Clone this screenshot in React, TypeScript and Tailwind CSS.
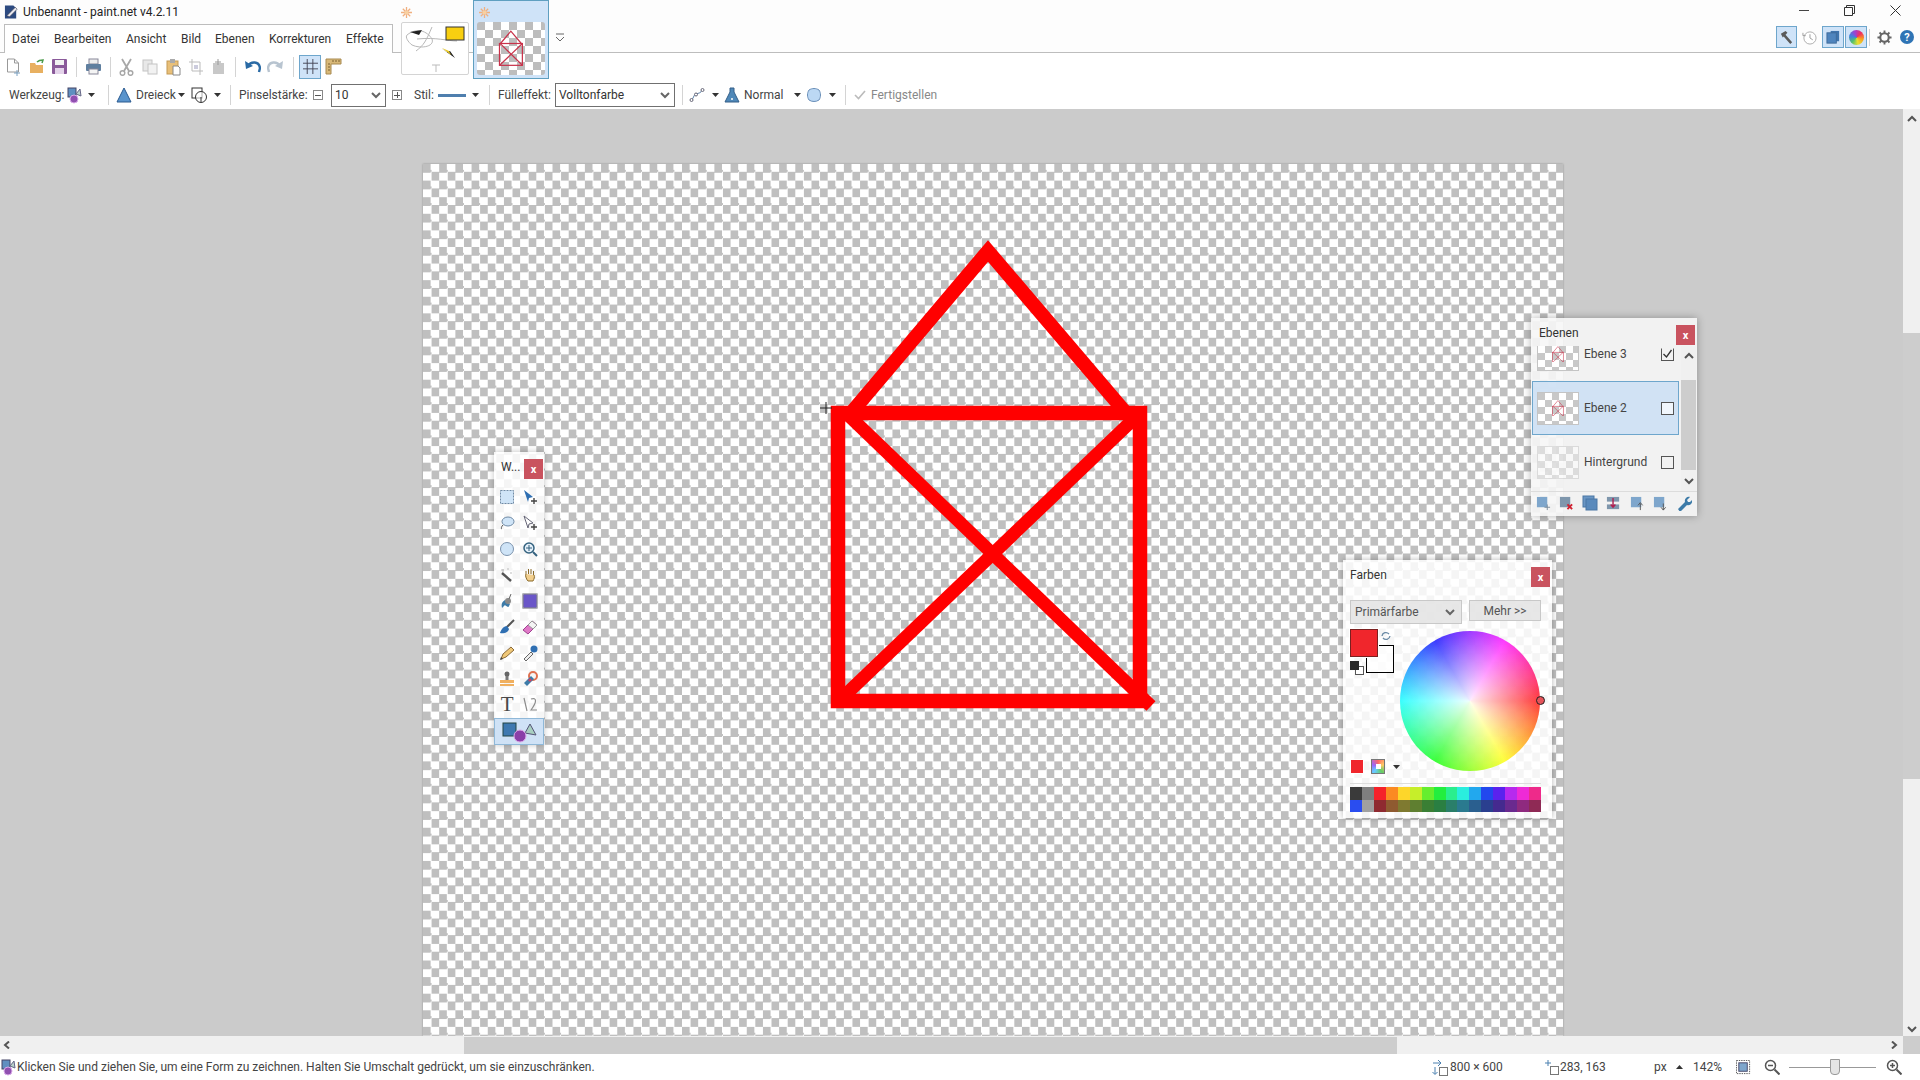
import type { ReactNode } from "react";

const PALETTE = [
  "bg-[#3a3a3a]", "bg-[#7f7f7f]", "bg-[#f5222a]", "bg-[#fb8a22]", "bg-[#fdd62a]", "bg-[#c6ee2a]", "bg-[#66ee2e]", "bg-[#22ee3e]",
  "bg-[#2aee8e]", "bg-[#2aeede]", "bg-[#22a8ee]", "bg-[#2248ee]", "bg-[#5a22ee]", "bg-[#b62aee]", "bg-[#ee2ad6]", "bg-[#ee2a8a]",
  "bg-[#2a4df0]", "bg-[#a0a0a0]", "bg-[#8f2a30]", "bg-[#8f5a30]", "bg-[#7f7a30]", "bg-[#5f7f30]", "bg-[#3a7f34]", "bg-[#2a7f42]",
  "bg-[#2a7f6a]", "bg-[#2a7a8f]", "bg-[#2a5f8f]", "bg-[#2a3f8f]", "bg-[#452a8f]", "bg-[#6a2a8f]", "bg-[#8f2a7f]", "bg-[#8f2a55]",
];

function Icon({ w = 16, h = 16, box = "0 0 16 16", children }: { w?: number; h?: number; box?: string; children: ReactNode }) {
  return (
    <svg width={w} height={h} viewBox={box} className="shrink-0" fill="none">
      {children}
    </svg>
  );
}

function Sep() {
  return <div className="h-[20px] w-px shrink-0 bg-[#d4d4d4]" />;
}

function Caret({ className = "" }: { className?: string }) {
  return (
    <svg width="7" height="4" viewBox="0 0 7 4" className={`shrink-0 ${className}`}>
      <path d="M0 0h7L3.5 4z" fill="#333" />
    </svg>
  );
}

function Chevron({ dir, color = "#555" }: { dir: "up" | "down" | "left" | "right"; color?: string }) {
  const d = {
    up: "M1 6l4-4 4 4",
    down: "M1 2l4 4 4-4",
    left: "M6 0.5L2 4l4 3.5",
    right: "M2 0.5L6 4 2 7.5",
  }[dir];
  return (
    <svg width="10" height="8" viewBox="0 0 10 8" className="shrink-0">
      <path d={d} stroke={color} strokeWidth="2" fill="none" />
    </svg>
  );
}

function House({ size = 20, color = "#c8324a", stroke = 16 }: { size?: number; color?: string; stroke?: number }) {
  return (
    <svg width={size} height={size * 1.4} viewBox="820 235 340 480" className="shrink-0">
      <g stroke={color} strokeWidth={stroke} fill="none">
        <rect x="838" y="413" width="302" height="288" />
        <polyline points="851,413 988,251 1126,413" />
        <line x1="845" y1="412" x2="1140" y2="700" />
        <line x1="840" y1="700" x2="1140" y2="413" />
      </g>
    </svg>
  );
}

function WinClose() {
  return (
    <div className="flex h-[20px] w-[19px] shrink-0 items-center justify-center bg-[#c9535f] text-[11px] font-bold leading-none text-white">
      x
    </div>
  );
}

function ToolBtn({ children }: { children: ReactNode }) {
  return <div className="flex h-[21px] items-center justify-center">{children}</div>;
}

function ToolsWindow() {
  return (
    <div className="absolute left-[494px] top-[343px] flex h-[293px] w-[50px] flex-col bg-white/85 shadow-[0_0_6px_rgba(0,0,0,0.25)]">
      <div className="flex h-[30px] items-start justify-between pl-[7px] pr-px pt-[7px]">
        <span className="text-[12px] leading-[16px] text-[#333]">W...</span>
        <WinClose />
      </div>
      <div className="mt-[4px] grid grid-cols-2 gap-y-[5px] pl-[2px] pr-[3px]">
        <ToolBtn>
          <Icon><rect x="1.5" y="1.5" width="13" height="13" fill="#cfe4f7" stroke="#6f8aa5" strokeDasharray="2 1" /></Icon>
        </ToolBtn>
        <ToolBtn>
          <Icon><path d="M2 1l9 7-4 1-1 4z" fill="#2f6fb2" /><path d="M12 9v6M9 12h6" stroke="#444" strokeWidth="1.4" /></Icon>
        </ToolBtn>
        <ToolBtn>
          <Icon><ellipse cx="9" cy="6.5" rx="6" ry="4.5" fill="#cfe4f7" stroke="#6f8aa5" /><path d="M4 10c-2 2-2 4-1 4" stroke="#555" /></Icon>
        </ToolBtn>
        <ToolBtn>
          <Icon><path d="M2 1l9 7-4 1-1 4z" fill="#fff" stroke="#667" /><path d="M12 9v6M9 12h6" stroke="#444" strokeWidth="1.4" /></Icon>
        </ToolBtn>
        <ToolBtn>
          <Icon><circle cx="8" cy="8" r="6.5" fill="#cfe4f7" stroke="#7c93ad" /></Icon>
        </ToolBtn>
        <ToolBtn>
          <Icon><circle cx="7" cy="7" r="5" fill="#e4f0fa" stroke="#34627f" strokeWidth="1.5" /><path d="M11 11l4 4" stroke="#34627f" strokeWidth="2" /><path d="M7 4v6M4 7h6" stroke="#34627f" /></Icon>
        </ToolBtn>
        <ToolBtn>
          <Icon><path d="M3 6l9 8" stroke="#555" strokeWidth="2.4" /><path d="M4 2v3M2 3h3M9 1v2M11 6h2" stroke="#bbb" /></Icon>
        </ToolBtn>
        <ToolBtn>
          <Icon><path d="M4 7V4M6.500 7V2M9 7V2M11.500 8V4M4 7c-1 1 0 5 2 7h5c1-2 2-4 1-6" stroke="#8a6a2a" fill="#f2cf8e" /></Icon>
        </ToolBtn>
        <ToolBtn>
          <Icon><path d="M3 15c-1-4 0-6 3-8l5 4c-1 2-1 3-2 3-2-1-3-2-3-2z" fill="#3d7ba8" /><circle cx="9" cy="8" r="3" fill="#8a8a8a" /><path d="M10 6l2-5" stroke="#666" /></Icon>
        </ToolBtn>
        <ToolBtn>
          <Icon><rect x="1" y="1" width="14" height="14" fill="#6a56c8" stroke="#334" /><rect x="1" y="1" width="14" height="14" fill="none" stroke="#fff" strokeWidth="0.5" /></Icon>
        </ToolBtn>
        <ToolBtn>
          <Icon><path d="M15 1L8 8" stroke="#555" strokeWidth="2" /><path d="M8 7c-4 0-6 4-7 7 3 1 8 0 9-4z" fill="#2f6fb2" /></Icon>
        </ToolBtn>
        <ToolBtn>
          <Icon><path d="M1 11l9-9 5 4-9 9z" fill="#e07ac8" stroke="#a04090" /><path d="M6 6l5 4 4-4-5-4z" fill="#f4f4f4" stroke="#999" /></Icon>
        </ToolBtn>
        <ToolBtn>
          <Icon><path d="M2 14l2-5 8-7 3 3-8 7z" fill="#f0c878" stroke="#8a6a3a" /><path d="M1 15l3-1-2-2z" fill="#444" /></Icon>
        </ToolBtn>
        <ToolBtn>
          <Icon><path d="M2 14l7-7 2 2-7 7z" fill="#eee" stroke="#666" /><circle cx="12" cy="4" r="3.500" fill="#2f6fb2" /></Icon>
        </ToolBtn>
        <ToolBtn>
          <Icon><circle cx="8" cy="3" r="2.500" fill="#666" /><rect x="6.500" y="5" width="3" height="4" fill="#777" /><rect x="1" y="9" width="14" height="3" fill="#f0b060" /><rect x="1" y="13" width="14" height="2" fill="#f0b060" /></Icon>
        </ToolBtn>
        <ToolBtn>
          <Icon><circle cx="11" cy="5" r="4" stroke="#e07050" strokeWidth="2" /><path d="M2 12l7-7 3 3-7 7z" fill="#3d7ba8" /><circle cx="8" cy="9" r="1.600" fill="#d04060" /></Icon>
        </ToolBtn>
        <ToolBtn>
          <span className="font-['Liberation_Serif',serif] text-[21px] leading-none text-[#4a4a4a]">T</span>
        </ToolBtn>
        <ToolBtn>
          <Icon><path d="M2 1l3 13M9 2c6-2 6 3 0 11h6" stroke="#8c8c8c" strokeWidth="1.2" /></Icon>
        </ToolBtn>
      </div>
      <div className="mt-auto flex h-[27px] items-center justify-center border border-[#8fb8d8] bg-[#cfe2f6]">
        <Icon w={40} h={22} box="0 0 40 22">
          <rect x="4" y="2" width="13" height="13" fill="#3d78b0" stroke="#244" />
          <path d="M26 12l5-9 6 11z" fill="#a8cfc0" stroke="#557" />
          <circle cx="21" cy="15" r="6" fill="#8a3fa8" stroke="#dca8e8" />
        </Icon>
      </div>
    </div>
  );
}

function LayerThumb({ children }: { children?: ReactNode }) {
  return (
    <div className="flex h-[33px] w-[42px] shrink-0 items-center justify-center overflow-hidden border border-[#c4c4c4] bg-[repeating-conic-gradient(#fff_0_25%,#c8c8c8_0_50%)] bg-[length:14px_14px]">
      {children}
    </div>
  );
}

function LayerRow({ name, thumb, checked, selected, dim }: { name: string; thumb: ReactNode; checked?: boolean; selected?: boolean; dim?: boolean }) {
  return (
    <div className={`flex h-[54px] items-center pl-[4px] pr-[3px] ${selected ? "border border-[#6ea6cc] bg-[#cde0f4]/90" : "border border-transparent"}`}>
      <div className={dim ? "opacity-50" : ""}>{thumb}</div>
      <span className="ml-[5px] flex-1 text-[12px] text-[#444]">{name}</span>
      <div className={`relative mr-[1px] h-[13px] w-[13px] shrink-0 border border-[#555] ${selected ? "bg-white/70" : ""} ${checked ? "border-t-transparent" : ""}`}>
        {checked && (
          <svg width="13" height="13" viewBox="0 0 13 13" className="absolute -left-px -top-px">
            <path d="M2.500 6l3 3 5-7" stroke="#333" strokeWidth="1.300" fill="none" />
          </svg>
        )}
      </div>
    </div>
  );
}

function LayersWindow() {
  return (
    <div className="absolute left-[1531px] top-[209px] flex h-[198px] w-[166px] flex-col bg-[#f6f6f6]/90 shadow-[0_0_8px_rgba(0,0,0,0.3)]">
      <div className="flex h-[28px] shrink-0 items-start justify-between pl-[8px] pr-[2px] pt-[7px]">
        <span className="text-[12px] leading-[16px] text-[#333]">Ebenen</span>
        <WinClose />
      </div>
      <div className="flex h-[145px] shrink-0 pr-px">
        <div className="min-w-0 flex-1 overflow-hidden pl-px pr-[2px]">
          <div className="-mt-[19px]">
            <LayerRow name="Ebene 3" checked thumb={<LayerThumb><House size={12} /></LayerThumb>} />
            <LayerRow name="Ebene 2" selected thumb={<LayerThumb><House size={12} /></LayerThumb>} />
            <LayerRow name="Hintergrund" dim thumb={<LayerThumb />} />
          </div>
        </div>
        <div className="flex w-[15px] shrink-0 flex-col items-center justify-between bg-[#f0f0f0] py-[6px]">
          <Chevron dir="up" />
          <div className="absolute top-[62px] h-[90px] w-[15px] bg-[#cdcdcd]" />
          <div className="relative z-10">
            <Chevron dir="down" />
          </div>
        </div>
      </div>
      <div className="flex flex-1 items-center justify-between border-t border-[#dcdcdc] px-[5px] pb-[2px]">
        <Icon w={15} h={15}><rect x="1" y="1" width="11" height="11" fill="#7ea6cc" /><path d="M12 9v6M9 12h6" stroke="#7a8a9a" /></Icon>
        <Icon w={15} h={15}><rect x="1" y="1" width="11" height="11" fill="#7e96ac" /><path d="M9 9l5 5M14 9l-5 5" stroke="#d02030" strokeWidth="2" /></Icon>
        <Icon w={16} h={16}><rect x="1" y="1" width="11" height="11" fill="#6a96c4" stroke="#4a76a4" /><rect x="4" y="4" width="11" height="11" fill="#5a8abc" stroke="#4a76a4" /></Icon>
        <Icon w={15} h={15}><rect x="1" y="1" width="13" height="5" fill="#7e96ac" /><rect x="1" y="9" width="13" height="5" fill="#7e96ac" /><path d="M7.500 2v10M5 9l2.500 3 2.500-3" stroke="#b02050" strokeWidth="1.500" fill="none" /></Icon>
        <Icon w={15} h={15}><rect x="1" y="1" width="11" height="11" fill="#7ea6cc" /><path d="M11 15V8M8.500 10l2.500-3 2.500 3" stroke="#555" fill="none" /></Icon>
        <Icon w={15} h={15}><rect x="1" y="1" width="11" height="11" fill="#7ea6cc" /><path d="M11 8v7M8.500 12l2.500 3 2.500-3" stroke="#555" fill="none" /></Icon>
        <Icon w={16} h={16}><path d="M2 14l7-7c-1-3 2-6 5-5l-3 3 1 2 2 0 2-2c1 3-2 6-5 5l-7 7z" fill="#3d7ba8" /></Icon>
      </div>
    </div>
  );
}

function ColorsWindow() {
  return (
    <div className="absolute left-[1343px] top-[451px] flex h-[258px] w-[209px] flex-col bg-white/85 px-[7px] shadow-[0_0_6px_rgba(0,0,0,0.3)]">
      <div className="-mr-[5px] flex h-[40px] shrink-0 items-start justify-between pt-[7px]">
        <span className="text-[12px] leading-[16px] text-[#333]">Farben</span>
        <WinClose />
      </div>
      <div className="flex h-[24px] shrink-0 items-start">
        <div className="flex h-[24px] w-[112px] items-center justify-between border border-[#c8c8c8] bg-[#e4e4e4]/90 pl-[4px] pr-[6px] text-[12px] text-[#555]">
          Primärfarbe
          <Chevron dir="down" color="#666" />
        </div>
        <div className="ml-[7px] flex h-[21px] w-[72px] items-center justify-center border border-[#c8c8c8] bg-[#e4e4e4]/90 text-[12px] text-[#555]">
          {"Mehr >>"}
        </div>
      </div>
      <div className="mt-[7px] flex h-[140px] shrink-0">
        <div className="flex w-[50px] shrink-0 flex-col justify-between">
          <div className="relative -mt-[2px] h-[45px]">
            <div className="absolute left-[16px] top-[16px] h-[28px] w-[28px] border border-black bg-white/70" />
            <div className="absolute left-0 top-0 h-[28px] w-[28px] border border-[#7a2020] bg-[#f0262c] outline outline-1 outline-white" />
            <svg width="10" height="10" viewBox="0 0 10 10" className="absolute left-[31px] top-[2px]">
              <path d="M1 5a4 4 0 0 1 7-2M9 5a4 4 0 0 1-7 2" stroke="#6a8aa5" strokeWidth="1.300" fill="none" />
            </svg>
            <div className="absolute left-[5px] top-[37px] h-[9px] w-[9px] border border-[#555] bg-white" />
            <div className="absolute left-0 top-[32px] h-[9px] w-[9px] bg-[#2a2a2a]" />
          </div>
          <div className="-mb-[3px] flex items-center">
            <div className="h-[15px] w-[15px] border border-white bg-[#f0262c]" />
            <div className="ml-[7px] flex h-[15px] w-[15px] items-center justify-center border border-[#777] bg-[conic-gradient(#f66,#fc6,#6c6,#6cf,#96f,#f66)]">
              <div className="h-[5px] w-[5px] bg-white" />
            </div>
            <Caret className="ml-[8px]" />
          </div>
        </div>
        <div className="relative h-[140px] w-[140px] shrink-0">
          <div className="h-[140px] w-[140px] rounded-full bg-[conic-gradient(from_90deg,#ff1a1a,#ffff1a,#1aff1a,#1affff,#1a1aff,#ff1aff,#ff1a1a)] opacity-[0.87]" />
          <div className="absolute inset-0 rounded-full bg-[radial-gradient(circle,rgba(255,255,255,0.92)_0%,rgba(255,255,255,0)_72%)]" />
          <div className="absolute left-[136px] top-[65px] h-[9px] w-[9px] rounded-full border border-[#222] bg-[#e6545a]" />
        </div>
      </div>
      <div className="mr-[4px] mt-[12px] grid shrink-0 grid-cols-16 border-t border-[#ddd] pt-[3px]">
        {PALETTE.map((c, i) => (
          <div key={i} className={`h-[12.500px] ${c}`} />
        ))}
      </div>
    </div>
  );
}

function TitleColumn() {
  return (
    <div className="w-[393px] shrink-0">
      <div className="flex h-[24px] items-center pl-[4px]">
        <Icon w={15} h={16}>
          <path d="M1 1h9l3 3v11H1z" fill="#2c4a80" />
          <path d="M3 12l9-9 2 2-8 8z" fill="#e8e8ef" stroke="#334" strokeWidth="0.6" />
        </Icon>
        <span className="ml-[4px] text-[12px] leading-none text-[#222]">Unbenannt - paint.net v4.2.11</span>
      </div>
      <div className="relative z-10 ml-[4px] flex h-[29px] items-center border-x border-t border-[#bdbdbd] bg-white pl-[7px] text-[12px] text-[#333]">
        <span className="w-[42px] shrink-0">Datei</span>
        <span className="w-[72px] shrink-0">Bearbeiten</span>
        <span className="w-[55px] shrink-0">Ansicht</span>
        <span className="w-[34px] shrink-0">Bild</span>
        <span className="w-[54px] shrink-0">Ebenen</span>
        <span className="w-[77px] shrink-0">Korrekturen</span>
        <span>Effekte</span>
      </div>
    </div>
  );
}

function Flower() {
  return (
    <svg width="11" height="11" viewBox="0 0 11 11" className="shrink-0">
      <path d="M5.500 0v11M0 5.500h11M1.800 1.800l7.400 7.400M9.200 1.800l-7.400 7.400" stroke="#f0b080" strokeWidth="1.300" />
      <circle cx="5.500" cy="5.500" r="2" fill="#f8d0a0" />
    </svg>
  );
}

function Tabs() {
  return (
    <div className="relative z-20 flex h-[79px] shrink-0 items-start">
      <div className="relative ml-[8px] mt-[22px] h-[53px] w-[68px] overflow-hidden rounded-[2px] border border-[#d4d4d4] bg-white">
        <svg width="68" height="53" viewBox="0 0 68 53">
          <path d="M5 12c10-8 20-4 25 4 3 8-12 10-20 6-4-3-7-8-5-10zM30 4c-6 14-8 18-16 24M15 16c20-2 30 2 40 2" stroke="#b8b8b8" fill="none" />
          <path d="M8 9l12-2-3 5z" fill="#222" />
          <rect x="44" y="4" width="18" height="13" fill="#f8cf10" stroke="#333" />
          <path d="M39 25l14 10-5-7-3 1z" fill="#222" />
          <path d="M40 25l7 3 2 4z" fill="#e8c820" />
          <path d="M30 42h8M34 42v7" stroke="#bbb" />
        </svg>
      </div>
      <div className="ml-[4px] flex h-[79px] w-[76px] flex-col items-start border border-[#5f9fc0] bg-[#cfe3f8]">
        <div className="mb-[4px] ml-[5px] mt-[6px]">
          <Flower />
        </div>
        <div className="ml-[3px] flex h-[53px] w-[68px] items-center justify-center rounded-[3px] bg-[repeating-conic-gradient(#fff_0_25%,#bdbdbd_0_50%)] bg-[length:16px_16px]">
          <House size={26} />
        </div>
      </div>
      <svg width="10" height="10" viewBox="0 0 10 10" className="ml-[6px] mt-[33px]">
        <path d="M1 1h8M1 4l4 4 4-4" stroke="#666" fill="none" />
      </svg>
      <div className="absolute left-[8px] top-[7px]">
        <Flower />
      </div>
    </div>
  );
}

function WindowControls() {
  return (
    <div className="ml-auto flex h-[52px] w-[144px] shrink-0 flex-col">
      <div className="flex h-[26px] shrink-0 items-start pt-[5px]">
        <div className="ml-[23px] mt-[5px] h-px w-[10px] bg-[#444]" />
        <svg width="11" height="11" viewBox="0 0 11 11" className="ml-[35px]">
          <path d="M0.500 2.500h8v8h-8zM2.500 2.500v-2h8v8h-2" stroke="#333" fill="none" />
        </svg>
        <svg width="11" height="11" viewBox="0 0 11 11" className="ml-[35px]">
          <path d="M0.500 0.500l10 10M10.500 0.500l-10 10" stroke="#333" fill="none" />
        </svg>
      </div>
      <div className="flex h-[22px] items-center">
        <div className="flex h-[22px] w-[21px] shrink-0 items-center justify-center border border-[#6ea6cc] bg-[#cfe3f8]">
          <Icon w={15} h={15}>
            <path d="M2 4l5-3 2 2-2 2 7 8-2 2-7-8-1 1z" fill="#5a5a5a" />
          </Icon>
        </div>
        <svg width="15" height="15" viewBox="0 0 16 16" className="ml-[5px] shrink-0">
          <circle cx="8.500" cy="8.500" r="6.500" fill="#fff" stroke="#aaa" />
          <path d="M8.500 4.500v4l3 2M1 3v3h3" stroke="#999" fill="none" />
        </svg>
        <div className="ml-[5px] flex h-[22px] w-[22px] shrink-0 items-center justify-center border border-[#6ea6cc] bg-[#cfe3f8]">
          <Icon w={15} h={15}>
            <rect x="5" y="1" width="9" height="11" fill="#3f74ad" />
            <rect x="1" y="3" width="10" height="11" fill="#4f84bd" stroke="#3f6a9a" />
          </Icon>
        </div>
        <div className="ml-px flex h-[22px] w-[22px] shrink-0 items-center justify-center border border-[#6ea6cc] bg-[#cfe3f8]">
          <div className="h-[15px] w-[15px] rounded-full bg-[conic-gradient(from_45deg,#f03060,#f8a020,#e8e030,#50c070,#4080e0,#a040d0,#f03060)]" />
        </div>
        <div className="ml-[2px] h-[17px] w-px shrink-0 bg-[#d4d4d4]" />
        <svg width="15" height="15" viewBox="0 0 16 16" className="ml-[7px] shrink-0">
          <circle cx="8" cy="8" r="4.500" fill="none" stroke="#666" strokeWidth="2.200" />
          <path d="M8 0.500v3M8 12.500v3M0.500 8h3M12.500 8h3M2.700 2.700l2.100 2.100M11.200 11.200l2.100 2.100M13.300 2.700l-2.100 2.100M4.800 11.200l-2.100 2.100" stroke="#666" strokeWidth="2" />
        </svg>
        <div className="ml-[8px] flex h-[14px] w-[14px] shrink-0 items-center justify-center rounded-full bg-[#2f74b5] text-[11px] font-bold leading-none text-white">
          ?
        </div>
      </div>
    </div>
  );
}

function ToolbarOne() {
  return (
    <div className="flex h-[27px] shrink-0 items-center gap-2 pl-[6px]">
      <Icon w={15} h={18} box="0 0 15 18">
        <path d="M1.500 1h7l4 4v9h-11zM8.500 1v4h4" fill="#fff" stroke="#999" />
        <path d="M11 12v6M8 15h6" stroke="#7aa0c0" />
      </Icon>
      <Icon w={16} h={17} box="0 0 16 17">
        <path d="M1 5h5l1 2h7v8H1z" fill="#e8b060" />
        <path d="M8 4c2-2 4-2 6-2l-1 3" stroke="#4a9a4a" strokeWidth="1.500" fill="none" />
      </Icon>
      <div className="-ml-[2px]">
        <Icon w={17} h={17} box="0 0 17 17">
          <rect x="1" y="1" width="15" height="15" rx="1" fill="#8a5a9a" />
          <rect x="4" y="2" width="9" height="5" fill="#f2f2f2" />
          <rect x="4" y="10" width="9" height="6" fill="#e4d4ea" />
        </Icon>
      </div>
      <Sep />
      <Icon w={17} h={17} box="0 0 17 17">
        <rect x="4" y="1" width="9" height="5" fill="#eee" stroke="#889" />
        <rect x="1" y="6" width="15" height="7" rx="1" fill="#5f7f9f" />
        <rect x="4" y="11" width="9" height="5" fill="#f4f4f4" stroke="#889" />
      </Icon>
      <Sep />
      <Icon w={15} h={18} box="0 0 15 18">
        <path d="M3 1l7 12M12 1L5 13" stroke="#a8a8a8" strokeWidth="1.800" />
        <circle cx="3.500" cy="15" r="2.300" stroke="#a8a8a8" strokeWidth="1.500" />
        <circle cx="11.500" cy="15" r="2.300" stroke="#a8a8a8" strokeWidth="1.500" />
      </Icon>
      <Icon w={16} h={16}>
        <rect x="1" y="1" width="9" height="11" fill="#e8e8e8" stroke="#c4c4c4" />
        <rect x="6" y="5" width="9" height="10" fill="#f2f2f2" stroke="#c4c4c4" />
      </Icon>
      <Icon w={15} h={18} box="0 0 15 18">
        <rect x="1" y="3" width="11" height="13" fill="#e8bf78" stroke="#c49a54" />
        <rect x="4" y="1" width="5" height="4" fill="#aaa" />
        <path d="M7 8h5l2 2v7H7z" fill="#fff" stroke="#888" />
      </Icon>
      <Icon w={14} h={16} box="0 0 14 16">
        <path d="M3 0v12h11M0 3h11v13" stroke="#bbb" fill="none" />
        <rect x="5" y="6" width="4" height="4" fill="#ccd" />
      </Icon>
      <Icon w={15} h={16} box="0 0 15 16">
        <rect x="2" y="4" width="11" height="11" fill="#c8c8c8" />
        <path d="M7 0v6M4 3h6" stroke="#999" />
      </Icon>
      <div className="ml-px">
        <Sep />
      </div>
      <Icon w={17} h={15} box="0 0 17 15">
        <path d="M4 7c3-5 11-5 12 2l-1 4" stroke="#2a6aa5" strokeWidth="2.400" fill="none" />
        <path d="M1 2l1 8 7-3z" fill="#2a6aa5" />
      </Icon>
      <div className="-ml-[2px]">
        <Icon w={17} h={15} box="0 0 17 15">
          <path d="M13 7C10 2 2 2 1 9l1 4" stroke="#b8c4d0" strokeWidth="2.400" fill="none" />
          <path d="M16 2l-1 8-7-3z" fill="#b8c4d0" />
        </Icon>
      </div>
      <div className="ml-px">
        <Sep />
      </div>
      <div className="-ml-[3px] flex h-[24px] w-[22px] items-center justify-center border border-[#6ea6cc] bg-[#cfe3f8]">
        <Icon w={15} h={15}>
          <path d="M4.500 0v16M10.500 0v16M0 4.500h16M0 10.500h16" stroke="#445" />
        </Icon>
      </div>
      <div className="-ml-[4px]">
        <Icon w={17} h={17} box="0 0 17 17">
          <path d="M1 1h15v5H6v10H1z" fill="#d8b878" stroke="#a88a50" />
          <path d="M3 6h2M3 9h2M3 12h2M8 2v2M11 2v2M14 2v2" stroke="#7a6030" />
        </Icon>
      </div>
    </div>
  );
}

function Combo({ className, text }: { className: string; text: string }) {
  return (
    <div className={`flex shrink-0 items-center justify-between border border-[#707070] bg-white pl-[3px] pr-[4px] text-[12px] text-[#333] ${className}`}>
      {text}
      <Chevron dir="down" color="#666" />
    </div>
  );
}

function ToolbarTwo() {
  return (
    <div className="flex h-[29px] shrink-0 items-center whitespace-nowrap pl-[9px] pt-px text-[12px] text-[#444]">
      <span className="w-[56px] shrink-0">Werkzeug:</span>
      <div className="ml-[2px]">
        <Icon w={15} h={17} box="0 0 15 17">
          <rect x="1" y="1" width="8" height="9" fill="#5f8fc0" stroke="#446" />
          <path d="M9 7l4-5 1 7z" fill="#b8d0c8" stroke="#668" />
          <circle cx="7" cy="12" r="4" fill="#9050b0" stroke="#d8a8e8" />
        </Icon>
      </div>
      <Caret className="ml-[6px]" />
      <div className="ml-[13px]"><Sep /></div>
      <div className="ml-[7px]">
        <Icon w={16} h={16}>
          <path d="M8 1l7 14H1z" fill="#5a94cc" stroke="#2a5a90" />
        </Icon>
      </div>
      <span className="ml-[4px] w-[38px] shrink-0">Dreieck</span>
      <Caret className="ml-[4px]" />
      <div className="ml-[6px]">
        <Icon w={17} h={17} box="0 0 17 17">
          <rect x="1" y="1" width="10" height="10" fill="#fff" stroke="#333" />
          <circle cx="10" cy="10" r="5.500" fill="#fff" fillOpacity="0.6" stroke="#333" />
          <path d="M10 10v5" stroke="#333" />
        </Icon>
      </div>
      <Caret className="ml-[6px]" />
      <div className="ml-[9px]"><Sep /></div>
      <span className="ml-[8px] w-[65px] shrink-0">Pinselstärke:</span>
      <div className="ml-[9px] flex h-[10px] w-[10px] shrink-0 items-center justify-center border border-[#888]">
        <div className="h-px w-[6px] bg-[#555]" />
      </div>
      <Combo className="ml-[8px] h-[23px] w-[55px]" text="10" />
      <div className="relative ml-[6px] flex h-[10px] w-[10px] shrink-0 items-center justify-center border border-[#888]">
        <div className="h-px w-[6px] bg-[#555]" />
        <div className="absolute h-[6px] w-px bg-[#555]" />
      </div>
      <span className="ml-[12px] w-[18px] shrink-0">Stil:</span>
      <div className="ml-[6px] h-[3px] w-[28px] shrink-0 bg-[#4f7fae]" />
      <Caret className="ml-[6px]" />
      <div className="ml-[10px]"><Sep /></div>
      <span className="ml-[8px] w-[51px] shrink-0">Fülleffekt:</span>
      <Combo className="ml-[6px] h-[24px] w-[120px]" text="Volltonfarbe" />
      <div className="ml-[7px]"><Sep /></div>
      <div className="ml-[6px]">
        <Icon w={16} h={16}>
          <path d="M2 13c3-1 2-5 5-6s5-1 6-4" stroke="#5a7fa8" fill="none" />
          <circle cx="2.500" cy="13" r="1.500" fill="#fff" stroke="#667" />
          <circle cx="7" cy="7.500" r="1.500" fill="#fff" stroke="#667" />
          <circle cx="13.500" cy="3" r="1.500" fill="#fff" stroke="#667" />
        </Icon>
      </div>
      <Caret className="ml-[7px]" />
      <div className="ml-[5px]">
        <Icon w={16} h={16}>
          <path d="M6 1h4v4l5 10H1L6 5z" fill="#4f88b8" stroke="#345f88" />
          <circle cx="8" cy="12" r="1" fill="#fff" />
        </Icon>
      </div>
      <span className="ml-[4px] w-[39px] shrink-0">Normal</span>
      <Caret className="ml-[11px]" />
      <div className="ml-[5px]">
        <Icon w={16} h={16}>
          <path d="M3 3c3-2 7-2 10 0 2 3 2 7 0 10-3 2-7 2-10 0-2-3-2-7 0-10z" fill="#bcd8f4" stroke="#6a8fb8" />
        </Icon>
      </div>
      <Caret className="ml-[7px]" />
      <div className="ml-[9px]"><Sep /></div>
      <div className="ml-[8px]">
        <Icon w={12} h={10} box="0 0 12 10">
          <path d="M1 5l3.500 3.500L11 1" stroke="#bbb" strokeWidth="1.600" fill="none" />
        </Icon>
      </div>
      <span className="ml-[5px] text-[#888]">Fertigstellen</span>
    </div>
  );
}

function Canvas() {
  return (
    <div className="relative h-full w-[1140px] bg-[repeating-conic-gradient(#fff_0_25%,#bfbfbf_0_50%)] bg-[length:16.2px_16.6px] shadow-[0_0_2px_rgba(0,0,0,0.3)]">
      <svg width="1140" height="872" viewBox="423 164 1140 872" className="absolute left-0 top-0">
        <g stroke="#ff0000" fill="none">
          <rect x="838" y="413" width="302" height="288" strokeWidth="14.500" />
          <polyline points="851,413 988,251 1126,413" strokeWidth="14" />
          <line x1="845" y1="412" x2="1151" y2="706" strokeWidth="13" />
          <line x1="840" y1="700" x2="1140" y2="413" strokeWidth="13" />
        </g>
        <path d="M826 402v12M820 408h12" stroke="#222" strokeWidth="1" />
      </svg>
    </div>
  );
}

function HScrollbar() {
  return (
    <div className="flex h-[18px] shrink-0 bg-[#f0f0f0]">
      <div className="relative flex min-w-0 flex-1 items-center pl-[3px]">
        <Chevron dir="left" />
        <div className="ml-[451px] h-[17px] w-[933px] bg-[#cdcdcd]" />
        <div className="ml-auto mr-[3px]">
          <Chevron dir="right" />
        </div>
      </div>
      <div className="w-[17px] shrink-0 bg-[#cdcdcd]" />
    </div>
  );
}

function VScrollbar() {
  return (
    <div className="flex w-[17px] shrink-0 flex-col items-center bg-[#f0f0f0] pt-[6px]">
      <Chevron dir="up" />
      <div className="mt-[210px] h-[446px] w-[17px] bg-[#cdcdcd]" />
      <div className="mt-auto pb-[3px]">
        <Chevron dir="down" />
      </div>
    </div>
  );
}

function StatusBar() {
  return (
    <div className="flex h-[26px] shrink-0 items-center whitespace-nowrap bg-white text-[12px] text-[#444]">
      <div className="ml-px">
        <Icon w={15} h={17} box="0 0 15 17">
          <rect x="1" y="1" width="8" height="9" fill="#5f8fc0" stroke="#446" />
          <path d="M9 7l4-5 1 7z" fill="#b8d0c8" stroke="#668" />
          <circle cx="7" cy="12" r="4" fill="#9050b0" stroke="#d8a8e8" />
        </Icon>
      </div>
      <span className="ml-px w-[1415px] shrink-0">
        Klicken Sie und ziehen Sie, um eine Form zu zeichnen. Halten Sie Umschalt gedrückt, um sie einzuschränken.
      </span>
      <Icon w={16} h={17} box="0 0 16 17">
        <path d="M1 4h8M6 1l3 3-3 3M3 8v7M0.500 13l2.500 2.500L5.500 13" stroke="#4a80b0" fill="none" />
        <rect x="7.500" y="8.500" width="8" height="8" fill="#fff" stroke="#777" />
      </Icon>
      <span className="ml-[2px] w-[95px] shrink-0">800 × 600</span>
      <Icon w={14} h={15} box="0 0 14 15">
        <path d="M3 0v6M0 3h6" stroke="#4a80b0" />
        <rect x="5.500" y="6.500" width="8" height="8" fill="#fff" stroke="#777" />
      </Icon>
      <span className="ml-px w-[94px] shrink-0">283, 163</span>
      <span className="w-[22px] shrink-0">px</span>
      <Caret className="rotate-180" />
      <span className="ml-[10px] w-[28px] shrink-0">142%</span>
      <div className="ml-[15px]">
        <Icon w={15} h={15}>
          <rect x="0.500" y="0.500" width="14" height="14" stroke="#555" strokeDasharray="1.500 1" />
          <rect x="3" y="3" width="9" height="9" fill="#7ea6cc" stroke="#446" />
        </Icon>
      </div>
      <div className="ml-[13px]">
        <Icon w={16} h={16}>
          <circle cx="6.500" cy="6.500" r="5" stroke="#555" strokeWidth="1.500" />
          <path d="M4 6.500h5" stroke="#555" strokeWidth="1.500" />
          <path d="M10.500 10.500l5 5" stroke="#555" strokeWidth="2" />
        </Icon>
      </div>
      <div className="relative ml-[9px] flex h-[16px] w-[87px] shrink-0 items-center">
        <div className="h-px w-full bg-[#999]" />
        <div className="absolute left-[41px] top-0 h-[16px] w-[10px] rounded-b-[4px] border border-[#999] bg-[#e4e4e4]" />
      </div>
      <div className="ml-[10px]">
        <Icon w={16} h={16}>
          <circle cx="6.500" cy="6.500" r="5" stroke="#555" strokeWidth="1.500" />
          <path d="M4 6.500h5M6.500 4v5" stroke="#555" strokeWidth="1.500" />
          <path d="M10.500 10.500l5 5" stroke="#555" strokeWidth="2" />
        </Icon>
      </div>
    </div>
  );
}

export default function App() {
  return (
    <div className="flex h-screen w-full flex-col overflow-hidden bg-white font-['Roboto','Noto_Sans',sans-serif]">
      <div className="flex h-[53px] shrink-0 items-start border-b border-[#bdbdbd] bg-[#fdfdfd]">
        <TitleColumn />
        <Tabs />
        <WindowControls />
      </div>
      <ToolbarOne />
      <ToolbarTwo />
      <div className="flex min-h-0 flex-1">
        <div className="relative min-w-0 flex-1 overflow-hidden bg-[#cbcbcb] pl-[423px] pt-[55px]">
          <Canvas />
          <ToolsWindow />
          <LayersWindow />
          <ColorsWindow />
        </div>
        <VScrollbar />
      </div>
      <HScrollbar />
      <StatusBar />
    </div>
  );
}
